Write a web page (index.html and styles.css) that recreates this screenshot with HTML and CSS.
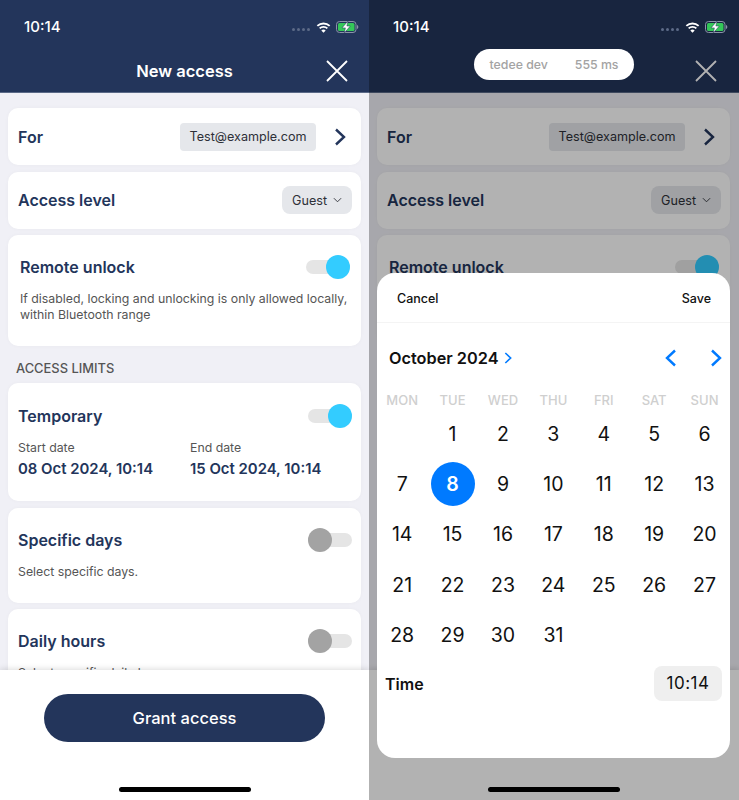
FILE: index.html
```html
<!DOCTYPE html>
<html lang="en">
<head>
<meta charset="UTF-8">
<title>New access</title>
<link rel="stylesheet" href="styles.css">
</head>
<body>
<svg class="defs" width="0" height="0">
    <symbol id="wifi" viewBox="0 0 16 12">
        <path d="M1.300 4.300a9.700 9.700 0 0 1 13.400 0M3.800 7a6 6 0 0 1 8.400 0" fill="none" stroke="#fff" stroke-width="2"/>
        <path d="M8 11.800 5.600 9.300a3.400 3.400 0 0 1 4.800 0z" fill="#fff"/>
    </symbol>
    <symbol id="battery" viewBox="0 0 23 12">
        <rect x=".5" y=".5" width="19.500" height="11" rx="3" fill="none" stroke="#8a94a8"/>
        <rect x="2" y="2" width="16.500" height="8" rx="1.500" fill="#34c759"/>
        <path d="M21 4v4c.8-.3 1.300-1 1.300-2s-.5-1.700-1.300-2z" fill="#8a94a8"/>
        <path d="M12 0 6 6.900h3.400L8.300 12l6-7h-3.400z" fill="#fff" stroke="#23355b" stroke-width=".5"/>
    </symbol>
    <symbol id="close" viewBox="0 0 22 22">
        <path d="M1 1l20 20M21 1L1 21" fill="none" stroke="currentColor" stroke-width="1.800"/>
    </symbol>
    <symbol id="chevron" viewBox="0 0 12 18">
        <path d="M2 1.500l8 7.500-8 7.500" fill="none" stroke="currentColor" stroke-width="2.400"/>
    </symbol>
    <symbol id="caret" viewBox="0 0 10 6">
        <path d="M1 1l4 4 4-4" fill="none" stroke="currentColor" stroke-width="1"/>
    </symbol>
</svg>

<div class="screens">
    <!-- left screen -->
    <div class="phone">
        <header class="topbar">
            <div class="status">
                <span class="clock">10:14</span>
                <span class="status-icons">
                    <span class="dots"><i></i><i></i><i></i><i></i></span>
                    <svg class="wifi"><use href="#wifi"/></svg>
                    <svg class="battery"><use href="#battery"/></svg>
                </span>
            </div>
            <div class="nav">
                <h1>New access</h1>
                <svg class="close"><use href="#close"/></svg>
            </div>
        </header>
        <main class="scroll">
            <section class="card row-card">
                <h2>For</h2>
                <span class="chip email">Test@example.com</span>
                <svg class="go"><use href="#chevron"/></svg>
            </section>
            <section class="card row-card">
                <h2>Access level</h2>
                <span class="chip level">Guest <svg class="caret"><use href="#caret"/></svg></span>
            </section>
            <section class="card remote">
                <div class="card-head">
                    <h2>Remote unlock</h2>
                    <span class="toggle on"></span>
                </div>
                <p>If disabled, locking and unlocking is only allowed locally, within Bluetooth range</p>
            </section>
            <div class="section-label">ACCESS LIMITS</div>
            <section class="card temporary">
                <div class="card-head">
                    <h2>Temporary</h2>
                    <span class="toggle on"></span>
                </div>
                <div class="dates">
                    <div><p>Start date</p><strong>08 Oct 2024, 10:14</strong></div>
                    <div><p>End date</p><strong>15 Oct 2024, 10:14</strong></div>
                </div>
            </section>
            <section class="card days">
                <div class="card-head">
                    <h2>Specific days</h2>
                    <span class="toggle"></span>
                </div>
                <p>Select specific days.</p>
            </section>
            <section class="card hours">
                <div class="card-head">
                    <h2>Daily hours</h2>
                    <span class="toggle"></span>
                </div>
                <p>Select specific daily hours.</p>
            </section>
        </main>
        <footer class="bottom">
            <button class="grant">Grant access</button>
            <div class="home-bar"></div>
        </footer>
    </div>

    <!-- right screen, same page with the date picker open -->
    <div class="phone">
        <header class="topbar">
            <div class="status above">
                <span class="clock">10:14</span>
                <span class="status-icons">
                    <span class="dots"><i></i><i></i><i></i><i></i></span>
                    <svg class="wifi"><use href="#wifi"/></svg>
                    <svg class="battery"><use href="#battery"/></svg>
                </span>
            </div>
            <div class="nav">
                <div class="pill"><span>tedee dev</span><span>555 ms</span></div>
                <svg class="close"><use href="#close"/></svg>
            </div>
        </header>
        <main class="scroll">
            <section class="card row-card">
                <h2>For</h2>
                <span class="chip email">Test@example.com</span>
                <svg class="go"><use href="#chevron"/></svg>
            </section>
            <section class="card row-card">
                <h2>Access level</h2>
                <span class="chip level">Guest <svg class="caret"><use href="#caret"/></svg></span>
            </section>
            <section class="card remote">
                <div class="card-head">
                    <h2>Remote unlock</h2>
                    <span class="toggle on"></span>
                </div>
            </section>
        </main>
        <footer class="bottom">
            <button class="grant">Grant access</button>
            <div class="home-bar"></div>
        </footer>

        <div class="dim"></div>
        <div class="picker">
            <div class="picker-head">
                <span>Cancel</span>
                <span>Save</span>
            </div>
            <div class="month-row">
                <span class="month">October 2024</span>
                <svg class="month-go"><use href="#chevron"/></svg>
                <svg class="prev"><use href="#chevron"/></svg>
                <svg class="next"><use href="#chevron"/></svg>
            </div>
            <div class="weekdays">
                <span>MON</span><span>TUE</span><span>WED</span><span>THU</span><span>FRI</span><span>SAT</span><span>SUN</span>
            </div>
            <div class="calendar">
                <span></span><span>1</span><span>2</span><span>3</span><span>4</span><span>5</span><span>6</span>
                <span>7</span><span class="selected"><b>8</b></span><span>9</span><span>10</span><span>11</span><span>12</span><span>13</span>
                <span>14</span><span>15</span><span>16</span><span>17</span><span>18</span><span>19</span><span>20</span>
                <span>21</span><span>22</span><span>23</span><span>24</span><span>25</span><span>26</span><span>27</span>
                <span>28</span><span>29</span><span>30</span><span>31</span>
            </div>
            <div class="time-row">
                <span class="time-label">Time</span>
                <span class="time-value">10:14</span>
            </div>
        </div>
    </div>
</div>
</body>
</html>
```

FILE: styles.css
```css
* {
    box-sizing: border-box;
}

body {
    margin: 0;
    font-family: Inter, "Liberation Sans", sans-serif;
    background: #f0f0f6;
}

h1, h2, p {
    margin: 0;
}

.defs {
    position: absolute;
}

.screens {
    display: grid;
    grid-template-columns: 369px 370px;
}

.phone {
    position: relative;
    display: flex;
    flex-direction: column;
    height: 800px;
    overflow: hidden;
    background: #f0f0f6;
}

.topbar {
    display: flow-root;
    height: 93px;
    flex: none;
    background: #23355b;
    color: #fff;
    border-bottom: 1px solid #5a6987;
}

.status {
    display: flex;
    justify-content: space-between;
    align-items: center;
    height: 20px;
    margin-top: 17px;
    padding: 0 10px 0 24px;
}

.status.above {
    position: relative;
    z-index: 3;
    padding-right: 11px;
}

.clock {
    font-size: 15px;
    font-weight: 500;
    line-height: 20px;
}

.status-icons {
    display: flex;
    align-items: center;
}

.dots {
    display: flex;
    gap: 2px;
    margin-right: 6px;
    padding-top: 4px;
}

.dots i {
    width: 3px;
    height: 3px;
    border-radius: 50%;
    background: #5d6b88;
}

.wifi {
    width: 15px;
    height: 11px;
    margin-right: 5px;
}

.battery {
    width: 23px;
    height: 12px;
}

.nav {
    display: flex;
    justify-content: center;
    align-items: center;
    position: relative;
    height: 30px;
    margin-top: 19px;
}

.nav h1 {
    font-size: 16.5px;
    font-weight: 600;
}

.close {
    position: absolute;
    right: 21px;
    top: 4px;
    width: 22px;
    height: 22px;
}

.phone + .phone .close {
    right: 22px;
}

.pill {
    position: relative;
    z-index: 3;
    display: flex;
    gap: 27px;
    height: 31px;
    margin-top: -13px;
    padding: 0 16px;
    align-items: center;
    border-radius: 16px;
    background: #fff;
    color: #a3a3a3;
    font-size: 12.300px;
    font-weight: 500;
}

.scroll {
    flex: 1;
    min-height: 0;
    overflow: hidden;
    padding: 15px 8px 0;
}

.phone + .phone .scroll {
    padding-right: 9px;
}

.card {
    margin-bottom: 6.500px;
    border-radius: 10px;
    background: #fff;
    box-shadow: 0 0 4px rgba(0, 0, 0, .03);
}

.card h2 {
    color: #23355b;
    font-size: 16px;
    font-weight: 600;
    line-height: 22px;
}

.card p {
    color: #555;
    font-size: 12.300px;
    line-height: 16px;
}

.row-card {
    display: flex;
    align-items: center;
    height: 57px;
    padding: 0 9px 0 10px;
}

.row-card h2 {
    margin-right: auto;
}

.chip {
    display: flex;
    align-items: center;
    height: 28px;
    border-radius: 4px;
    background: #e5e7eb;
    color: #2e3038;
    font-size: 12.600px;
}

.email {
    padding: 0 9.500px;
}

.level {
    padding: 0 10px 0 10.500px;
    border-radius: 8px;
}

.caret {
    width: 9px;
    height: 6px;
    margin-left: 6px;
    color: #2e3038;
}

.go {
    width: 12px;
    height: 18px;
    margin: 0 6px 0 18px;
    color: #23355b;
}

.card-head {
    display: flex;
    justify-content: space-between;
    align-items: center;
}

.remote {
    height: 111px;
    padding: 21px 11px 0 12px;
}

.remote p {
    margin-top: 13px;
}

.section-label {
    margin: 15px 0 6px 8px;
    color: #555;
    font-size: 12.900px;
    font-weight: 500;
    line-height: 16px;
}

.temporary {
    height: 118px;
    padding: 22px 9px 0 10px;
}

.dates {
    display: grid;
    grid-template-columns: 172px 1fr;
    margin-top: 13px;
}

.dates strong {
    display: block;
    margin-top: 4px;
    color: #23355b;
    font-size: 14.900px;
    font-weight: 600;
}

.days {
    height: 95px;
    padding: 21px 9px 0 10px;
}

.days p,
.hours p {
    margin-top: 13px;
}

.hours {
    height: 120px;
    padding: 21px 9px 0 10px;
}

.toggle {
    position: relative;
    display: block;
    flex: none;
    width: 44px;
    height: 14px;
    border-radius: 7px;
    background: #e5e5e5;
}

.toggle::after {
    content: "";
    position: absolute;
    top: -5px;
    left: 0;
    width: 24px;
    height: 24px;
    border-radius: 50%;
    background: #a3a3a3;
}

.toggle.on::after {
    left: 20px;
    background: #33ccff;
}

.bottom {
    position: relative;
    height: 130px;
    flex: none;
    padding-top: 24px;
    background: #fff;
    box-shadow: 0 -1px 6px rgba(0, 0, 0, .14);
}

.grant {
    display: block;
    width: 281px;
    height: 48px;
    margin: 0 auto;
    border: 0;
    border-radius: 24px;
    background: #23355b;
    color: #fff;
    font-family: inherit;
    font-size: 16.500px;
    font-weight: 500;
}

.home-bar {
    width: 132px;
    height: 5px;
    margin: 45px auto 0;
    border-radius: 3px;
    background: #000;
}

/* date picker layer */
.dim {
    position: absolute;
    inset: 0;
    z-index: 1;
    background: rgba(0, 0, 0, .3);
}

.picker {
    position: absolute;
    left: 8px;
    top: 273px;
    z-index: 2;
    width: 353px;
    height: 485px;
    border-radius: 18px;
    background: #fff;
    color: #111;
}

.picker-head {
    display: flex;
    justify-content: space-between;
    align-items: center;
    height: 50px;
    padding: 2px 19px 0 20px;
    border-bottom: 1px solid #f4f4f4;
    font-size: 12.500px;
    font-weight: 500;
}

.month-row {
    display: flex;
    align-items: center;
    height: 24px;
    margin-top: 23px;
    padding: 0 8px 0 12px;
}

.month {
    font-size: 16.300px;
    font-weight: 600;
}

.month-row svg {
    color: #007aff;
}

.month-go {
    width: 8px;
    height: 12px;
    margin-left: 6px;
}

.prev {
    width: 12px;
    height: 18px;
    margin-left: auto;
    transform: scaleX(-1);
}

.next {
    width: 12px;
    height: 18px;
    margin-left: 33px;
}

.weekdays,
.calendar {
    display: grid;
    grid-template-columns: repeat(7, 50.400px);
    text-align: center;
}

.weekdays {
    margin-top: 22px;
    color: #cfcfcf;
    font-size: 13px;
    font-weight: 500;
    line-height: 16px;
}

.calendar {
    grid-auto-rows: 50.300px;
    margin-top: .5px;
    font-size: 19.500px;
}

.calendar span {
    display: flex;
    justify-content: center;
    align-items: center;
}

.calendar b {
    display: flex;
    justify-content: center;
    align-items: center;
    width: 44px;
    height: 44px;
    border-radius: 50%;
    background: #007aff;
    color: #fff;
    font-weight: 600;
}

.time-row {
    display: flex;
    justify-content: space-between;
    align-items: center;
    margin-top: 6px;
    padding: 0 8px;
}

.time-label {
    margin-top: 2px;
    font-size: 16px;
    font-weight: 600;
}

.time-value {
    display: flex;
    justify-content: center;
    align-items: center;
    width: 68px;
    height: 35px;
    border-radius: 8px;
    background: #efefef;
    font-size: 17px;
    letter-spacing: .5px;
}
```
